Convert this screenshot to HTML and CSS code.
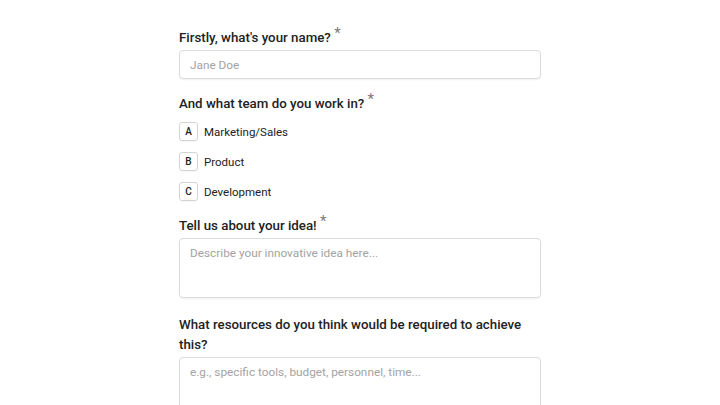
FILE: index.html
```html
<!DOCTYPE html>
<html lang="en">
<head>
<meta charset="utf-8">
<title>Idea form</title>
<link rel="stylesheet" href="styles.css">
</head>
<body>
<form class="form">
  <div class="field">
    <label class="label" for="name">Firstly, what's your name? <span class="req">*</span></label>
    <input class="input" id="name" type="text" placeholder="Jane Doe">
  </div>
  <div class="field field-options">
    <div class="label">And what team do you work in? <span class="req">*</span></div>
    <div class="options">
      <div class="option"><span class="key">A</span><span class="opt-text">Marketing/Sales</span></div>
      <div class="option"><span class="key">B</span><span class="opt-text">Product</span></div>
      <div class="option"><span class="key">C</span><span class="opt-text">Development</span></div>
    </div>
  </div>
  <div class="field">
    <label class="label" for="idea">Tell us about your idea! <span class="req">*</span></label>
    <textarea class="textarea" id="idea" placeholder="Describe your innovative idea here..."></textarea>
  </div>
  <div class="field field-after-area">
    <label class="label" for="res">What resources do you think would be required to achieve this?</label>
    <textarea class="textarea" id="res" placeholder="e.g., specific tools, budget, personnel, time..."></textarea>
  </div>
</form>
</body>
</html>
```
FILE: styles.css
```css
html, body {
  margin: 0;
  padding: 0;
  background: #ffffff;
}
body {
  font-family: Roboto, Inter, "Liberation Sans", sans-serif;
  color: #222222;
}
.form {
  width: 362px;
  margin: 0 auto;
  padding-top: 28px;
  display: flex;
  flex-direction: column;
  gap: 15px;
}
.field {
  display: flex;
  flex-direction: column;
}
.field-after-area {
  margin-top: 2px;
}
.label {
  display: block;
  font-size: 13.3px;
  line-height: 20px;
  font-weight: 500;
  color: #222222;
  margin-bottom: 2px;
}
.req {
  color: #7a7a7a;
  font-size: 15px;
  vertical-align: 4px;
  line-height: 0;
  font-weight: 400;
}
.input, .textarea {
  display: block;
  box-sizing: border-box;
  width: 100%;
  border: 1px solid #dcdcdc;
  border-radius: 4px;
  box-shadow: 0 1px 2px rgba(0, 0, 0, 0.06);
  font-family: Roboto, Inter, "Liberation Sans", sans-serif;
  font-size: 11.8px;
  color: #222222;
  background: #fff;
  margin: 0;
  outline: none;
}
.input {
  height: 29px;
  padding: 0 10px;
}
.textarea {
  height: 60px;
  padding: 5px 10px;
  resize: none;
  line-height: 18px;
}
.input::placeholder, .textarea::placeholder {
  color: #a3a3a3;
}
.field-options .label {
  margin-bottom: 8px;
}
.options {
  display: flex;
  flex-direction: column;
  gap: 11px;
}
.option {
  display: flex;
  align-items: center;
  gap: 6px;
  height: 19px;
}
.key {
  box-sizing: border-box;
  width: 19px;
  height: 19px;
  border: 1px solid #d4d4d4;
  border-radius: 3px;
  display: flex;
  align-items: center;
  justify-content: center;
  font-size: 10px;
  font-weight: 500;
  color: #222222;
  box-shadow: 0 1px 1px rgba(0, 0, 0, 0.04);
}
.opt-text {
  font-size: 11.5px;
  color: #222222;
}
```
